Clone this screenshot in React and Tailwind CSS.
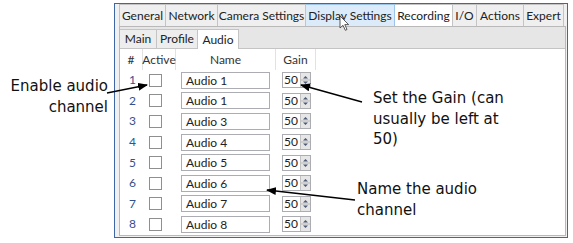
import React from "react";

const mainTabs = [
  { label: "General", w: "w-[47px]" },
  { label: "Network", w: "w-[52px]" },
  { label: "Camera Settings", w: "w-[88px]" },
  { label: "Display Settings", w: "w-[89px]", hover: true },
  { label: "Recording", w: "w-[58px]", active: true },
  { label: "I/O", w: "w-[24px]" },
  { label: "Actions", w: "w-[47px]" },
  { label: "Expert", w: "w-[40px]" },
];

const subTabs = [
  { label: "Main", w: "w-[37px]" },
  { label: "Profile", w: "w-[41px]" },
  { label: "Audio", w: "w-[41px]", active: true },
];

const channels = ["Audio 1", "Audio 1", "Audio 3", "Audio 4", "Audio 5", "Audio 6", "Audio 7", "Audio 8"];

function Spinner() {
  return (
    <div className="w-[29px] h-[16px] border border-[#abadb3] bg-white flex">
      <div className="flex-1 text-[12px] leading-[14px] pl-[1px] text-[#222]">50</div>
      <div className="w-[10px] bg-[#e6e6e6] border-l border-[#c2c2c2]">
        <svg width="9" height="14" viewBox="0 0 9 14">
          <path d="M2 5.5 L4.5 3 L7 5.5 Z" fill="#4a5a78" />
          <line x1="0" y1="7" x2="9" y2="7" stroke="#b8b8b8" strokeWidth="1" />
          <path d="M2 8.5 L4.5 11 L7 8.5 Z" fill="#4a5a78" />
        </svg>
      </div>
    </div>
  );
}

export default function App() {
  return (
    <div className="relative w-[573px] h-[243px] bg-white flex overflow-hidden font-['Lato','Noto_Sans',sans-serif]">
      {/* left callout */}
      <div className="w-[114px] shrink-0 pt-[76px] pr-[6px] text-right text-[15px] leading-[21px] text-[#111] font-['DejaVu_Sans',sans-serif]">
        Enable audio
        <br />
        channel
      </div>

      {/* window */}
      <div className="mt-[3px] w-[454px] h-[235px] border border-[#3f67a6] bg-[#f0f0f0] pl-[4px] pr-[1px] pb-[1px] flex flex-col">
        <div className="flex h-[22px] shrink-0">
          {mainTabs.map((t, i) => (
            <div
              key={t.label}
              className={`${t.w} h-[22px] border-t border-r ${i === 0 ? "border-l" : ""} flex items-center justify-center text-[12px] whitespace-nowrap text-[#222] ${
                t.active
                  ? "bg-white border-[#c4c4c4]"
                  : t.hover
                  ? "bg-[#dcebfa] border-[#9cc3ea]"
                  : "bg-[#efefef] border-[#c4c4c4]"
              }`}
            >
              {t.label}
            </div>
          ))}
        </div>

        <div className="flex-1 flex flex-col bg-white border border-[#b9b9b9]">
          <div className="h-[22px] shrink-0 bg-[#e6e6e6] border-b border-[#c4c4c4] flex items-end">
            {subTabs.map((t) => (
              <div
                key={t.label}
                className={`${t.w} border-t border-r border-[#c4c4c4] flex items-center justify-center text-[12px] text-[#222] ${
                  t.active ? "h-[20px] -mb-px bg-white" : "h-[19px] bg-[#ededed]"
                }`}
              >
                {t.label}
              </div>
            ))}
          </div>

          <div className="flex h-[21px] items-center text-[12px] text-[#333]">
            <div className="w-[23px] h-full flex items-center justify-center border-r border-[#e2e2e2]">#</div>
            <div className="w-[33px] h-full flex items-center justify-center border-r border-[#e2e2e2]">Active</div>
            <div className="w-[100px] h-full flex items-center justify-center border-r border-[#e2e2e2]">Name</div>
            <div className="w-[40px] h-full flex items-center justify-center border-r border-[#e2e2e2]">Gain</div>
          </div>

          {channels.map((name, i) => (
            <div key={i} className="flex h-[20.6px] items-center text-[12px]">
              <div className="w-[23px] text-center text-[#34508f] pl-[2px]">{i + 1}</div>
              <div className="w-[33px] pl-[6px]">
                <div className="w-[13px] h-[13px] border border-[#8e8f8f] bg-white" />
              </div>
              <div className="w-[100px] pl-[5px]">
                <div className="w-[89px] h-[17px] border border-[#abadb3] bg-white pl-[4px] leading-[15px] text-[#222]">
                  {name}
                </div>
              </div>
              <div className="w-[40px] pl-[6px]">
                <Spinner />
              </div>
            </div>
          ))}
        </div>
      </div>

      {/* callouts over the panel */}
      <div className="absolute left-[373px] top-[88px] text-[15px] leading-[20.5px] text-[#111] font-['DejaVu_Sans',sans-serif]">
        Set the Gain (can
        <br />
        usually be left at
        <br />
        50)
      </div>
      <div className="absolute left-[357px] top-[179px] text-[15px] leading-[21px] text-[#111] font-['DejaVu_Sans',sans-serif]">
        Name the audio
        <br />
        channel
      </div>

      <svg className="absolute inset-0 pointer-events-none" width="573" height="243" viewBox="0 0 573 243">
        <defs>
          <marker id="head" markerWidth="10" markerHeight="8" refX="9" refY="4" orient="auto" markerUnits="userSpaceOnUse">
            <path d="M0 0 L10 4 L0 8 Z" fill="#000" />
          </marker>
        </defs>
        <line x1="107" y1="93" x2="147" y2="85" stroke="#000" strokeWidth="1.4" markerEnd="url(#head)" />
        <line x1="362" y1="102" x2="301" y2="85" stroke="#000" strokeWidth="1.4" markerEnd="url(#head)" />
        <line x1="355" y1="200" x2="267" y2="190" stroke="#000" strokeWidth="1.4" markerEnd="url(#head)" />
        {/* mouse cursor */}
        <path
          d="M340 16 L340 28 L343 25.3 L345.3 30.3 L347 29.5 L344.8 24.6 L348.6 24.6 Z"
          fill="#fff"
          stroke="#333"
          strokeWidth="0.8"
          strokeLinejoin="round"
        />
      </svg>
    </div>
  );
}
